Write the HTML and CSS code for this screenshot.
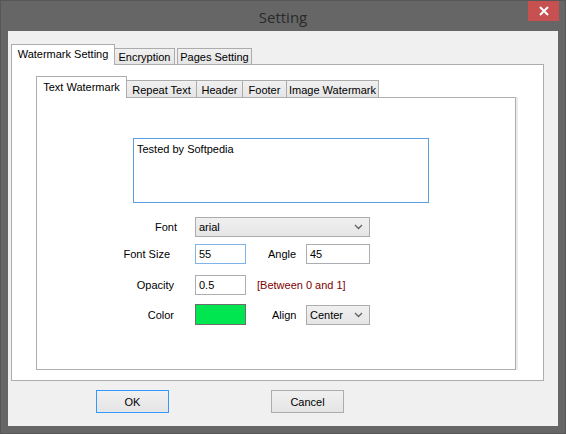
FILE: index.html
```html
<!DOCTYPE html>
<html lang="en">
<head>
    <meta charset="UTF-8">
    <title>Setting</title>
    <link rel="stylesheet" href="styles.css">
</head>
<body>
    <div class="window">
        <div class="titlebar">
            <span class="title">Setting</span>
            <div class="close-btn">
                <svg width="10" height="10" viewBox="0 0 10 10"><path d="M1 1L9 9M9 1L1 9" stroke="#fff" stroke-width="2"/></svg>
            </div>
        </div>
        <div class="client">
            <div class="tabstrip outer-strip">
                <div class="tab active tab-wm">Watermark Setting</div>
                <div class="tab tab-enc">Encryption</div>
                <div class="tab tab-pages">Pages Setting</div>
            </div>
            <div class="page outer-page">
                <div class="tabstrip inner-strip">
                    <div class="tab active tab-text">Text Watermark</div>
                    <div class="tab tab-repeat">Repeat Text</div>
                    <div class="tab tab-header">Header</div>
                    <div class="tab tab-footer">Footer</div>
                    <div class="tab tab-image">Image Watermark</div>
                </div>
                <div class="page inner-page">
                    <div class="textbox">Tested by Softpedia</div>

                    <div class="row row-font">
                        <label class="lbl lbl-font">Font</label>
                        <div class="combo combo-font">
                            <span>arial</span>
                            <svg width="9" height="6" viewBox="0 0 9 6"><path d="M1 1L4.5 4.5L8 1" fill="none" stroke="#606060" stroke-width="1.3"/></svg>
                        </div>
                    </div>

                    <div class="row row-size">
                        <label class="lbl lbl-size">Font Size</label>
                        <div class="field field-small focused">55</div>
                        <label class="lbl2 lbl-angle">Angle</label>
                        <div class="field field-wide">45</div>
                    </div>

                    <div class="row row-opacity">
                        <label class="lbl lbl-opacity">Opacity</label>
                        <div class="field field-small">0.5</div>
                        <span class="hint">[Between 0 and 1]</span>
                    </div>

                    <div class="row row-color">
                        <label class="lbl lbl-color">Color</label>
                        <div class="swatch"></div>
                        <label class="lbl2 lbl-align">Align</label>
                        <div class="combo combo-align">
                            <span>Center</span>
                            <svg width="9" height="6" viewBox="0 0 9 6"><path d="M1 1L4.5 4.5L8 1" fill="none" stroke="#606060" stroke-width="1.3"/></svg>
                        </div>
                    </div>
                </div>
            </div>
            <div class="dialog-buttons">
                <button class="btn btn-default">OK</button>
                <button class="btn">Cancel</button>
            </div>
        </div>
    </div>
</body>
</html>
```

FILE: styles.css
```css
* {
    box-sizing: border-box;
}
body {
    margin: 0;
    width: 566px;
    height: 434px;
    overflow: hidden;
    font-family: "Liberation Sans", Arial, sans-serif;
    font-size: 11px;
    color: #000;
    background: #666;
}
.window {
    width: 566px;
    height: 434px;
    background: #666;
    border: 1px solid #575757;
    position: relative;
}
.titlebar {
    height: 30px;
    display: flex;
    align-items: center;
    justify-content: center;
}
.title {
    font-family: "Open Sans", "Noto Sans", sans-serif;
    font-size: 15px;
    color: #2a2a2a;
    margin-top: 1px;
}
.close-btn {
    position: absolute;
    top: 0;
    right: 6px;
    width: 31px;
    height: 20px;
    background: #c75050;
    display: flex;
    align-items: center;
    justify-content: center;
}
.client {
    margin: 0 7px;
    height: 395px;
    background: #f0f0f0;
    padding-top: 13px;
}

/* tabs */
.tabstrip {
    display: flex;
    align-items: flex-end;
    position: relative;
    z-index: 1;
}
.outer-strip {
    height: 20px;
    margin-left: 3px;
}
.inner-strip {
    height: 21px;
}
.tab {
    height: 16px;
    border: 1px solid #acacac;
    border-bottom: none;
    background: linear-gradient(#f0f0f0, #e5e5e5);
    display: flex;
    align-items: center;
    justify-content: center;
    white-space: nowrap;
    padding-top: 1px;
}
.inner-strip .tab {
    height: 17px;
}
.tab + .tab {
    margin-left: -1px;
}
.tab.active {
    height: 21px;
    margin-bottom: -1px;
    background: #fff;
    border-color: #adadad;
    position: relative;
    z-index: 2;
    padding-top: 0;
    padding-bottom: 2px;
}
.inner-strip .tab.active {
    height: 22px;
}
.tab-wm { width: 104px; }
.tab-enc { width: 61px; margin-left: -1px; }
.tab-pages { width: 75px; margin-left: 2px !important; }
.tab-text { width: 91px; }
.tab-repeat { width: 71px; }
.tab-header { width: 47px; }
.tab-footer { width: 45px; }
.tab-image { width: 93px; }

.page {
    background: #fff;
    border: 1px solid #adadad;
}
.outer-page {
    margin-left: 3px;
    width: 533px;
    height: 317px;
    padding: 11px 0 0 24px;
}
.inner-page {
    width: 480px;
    height: 273px;
    padding-top: 40px;
    box-shadow: 2px 0 0 #ececec;
}

/* form */
.textbox {
    margin-left: 96px;
    width: 296px;
    height: 65px;
    border: 1px solid #5a9de3;
    padding: 4px 3px;
}
.row {
    display: flex;
    align-items: center;
    height: 20px;
    margin-left: 83px;
}
.row-font { margin-top: 14px; }
.row-size { margin-top: 7px; }
.row-opacity { margin-top: 11px; }
.row-color { margin-top: 9px; height: 21px; }
.lbl {
    width: 60px;
    text-align: right;
    margin-right: 15px;
}
.lbl-font { padding-right: 3px; }
.lbl-size { padding-right: 10px; }
.lbl-opacity { padding-right: 6px; }
.lbl-color { padding-right: 6px; }
.lbl2 {
    width: 60px;
}
.lbl-angle { padding-left: 22px; }
.lbl-align { padding-left: 26px; }
.field {
    height: 20px;
    border: 1px solid #abadb3;
    background: #fff;
    padding: 3px 0 0 3px;
}
.field.focused {
    border-color: #7eb4ea;
}
.field-small { width: 51px; }
.field-wide { width: 64px; }
.hint {
    margin-left: 11px;
    color: #800000;
}
.swatch {
    width: 51px;
    height: 21px;
    border: 1px solid #6e6e6e;
    background: #00e650;
}
.combo {
    height: 20px;
    border: 1px solid #acacac;
    background: linear-gradient(#f0f0f0, #e5e5e5);
    display: flex;
    align-items: center;
    justify-content: space-between;
    padding: 0 6px 0 3px;
}
.combo-font { width: 175px; }
.combo-align { width: 64px; }

/* buttons */
.dialog-buttons {
    display: flex;
    gap: 102px;
    margin: 9px 0 0 88px;
}
.btn {
    width: 73px;
    height: 23px;
    border: 1px solid #acacac;
    background: linear-gradient(#f0f0f0, #e5e5e5);
    font-family: "Liberation Sans", Arial, sans-serif;
    font-size: 11px;
    color: #000;
    padding: 0;
}
.btn-default {
    border-color: #3399ff;
}
```
